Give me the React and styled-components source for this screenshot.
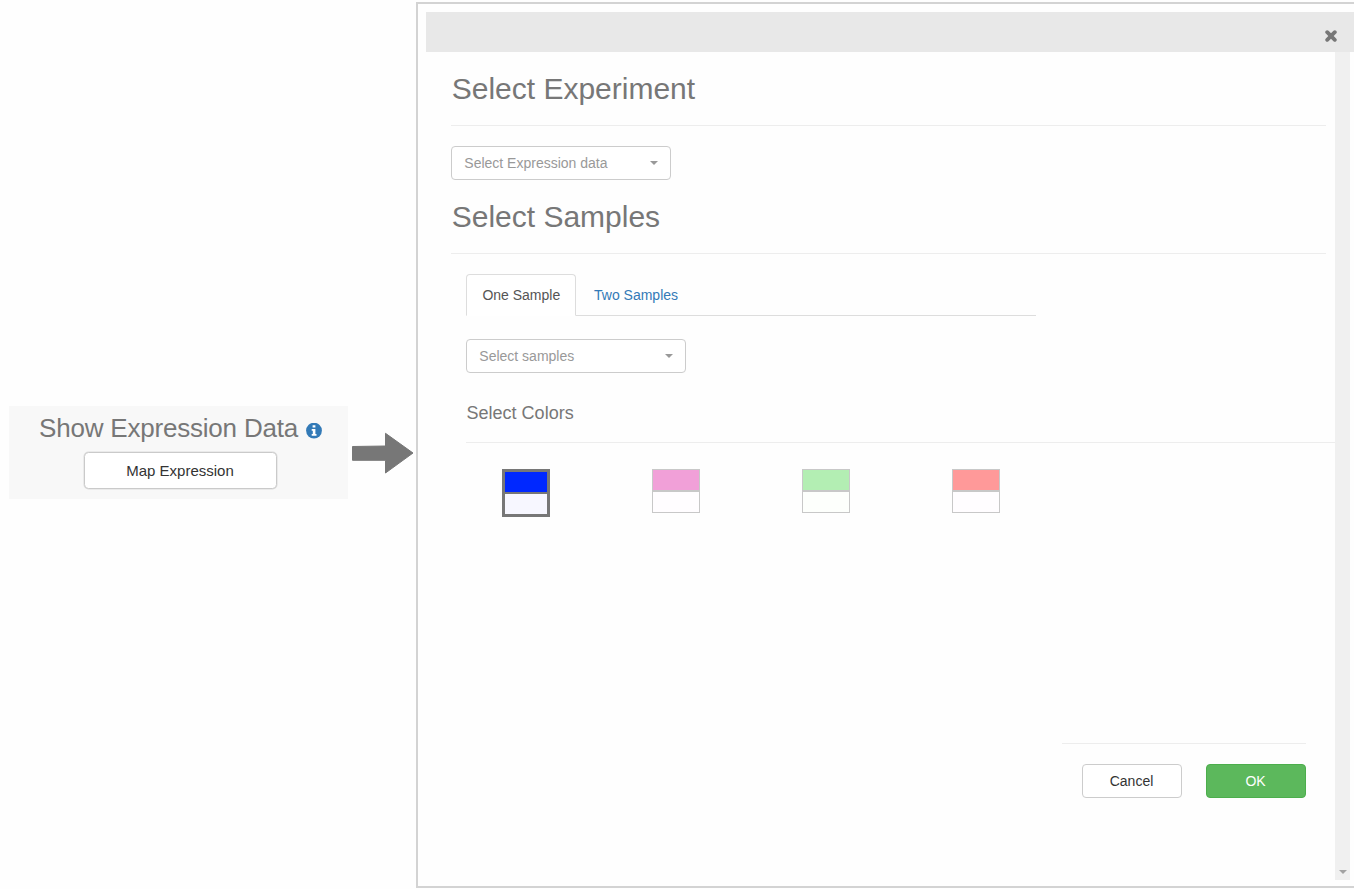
import React from 'react';
import styled, { createGlobalStyle, css } from 'styled-components';

const GlobalStyle = createGlobalStyle`
  * { box-sizing: border-box; }
  body {
    margin: 0;
    background: #fefefe;
    color: #777;
    font: 14px/20px "Liberation Sans", Arial, sans-serif;
    overflow: hidden;
  }
`;

const Page = styled.main`
  display: flex;
  width: 1354px;
  height: 889px;
  overflow: hidden;
`;

const Launcher = styled.section`
  flex: none;
  width: 339px;
  height: 93px;
  margin: 406px 0 0 9px;
  background: #f8f8f8;
`;

const LauncherTitle = styled.h3`
  display: flex;
  align-items: center;
  margin: 0;
  padding: 7px 0 0 30px;
  font-size: 26px;
  font-weight: 400;
  line-height: 30px;
  white-space: nowrap;
  letter-spacing: -0.2px;

  svg { flex: none; margin: 5px 0 0 8px; }
`;

const ArrowIcon = styled.svg`
  flex: none;
  width: 64px;
  height: 42px;
  margin: 432px 0 0 3px;
`;

const Dialog = styled.section`
  flex: none;
  width: 938px;
  height: 886px;
  margin: 2px 0 0 1px;
  padding: 8px 0 0 8px;
  border: 2px solid #d3d3d3;
  border-right: 0;
`;

const DialogHeader = styled.header`
  display: flex;
  justify-content: flex-end;
  height: 40px;
  padding: 18px 17px 0 0;
  background: #e8e8e8;
`;

const CloseButton = styled.button`
  width: 12px;
  height: 12px;
  padding: 0;
  border: 0;
  background: none;

  svg { display: block; }
`;

const DialogBody = styled.div`
  display: flex;
  height: 828px;
`;

const Content = styled.div`
  width: 909px;
  padding: 20px 0 0 25px;
`;

const Scrollbar = styled.div`
  display: flex;
  justify-content: center;
  align-items: flex-end;
  width: 15px;
  padding-bottom: 6px;
  background: #f0f0f0;
`;

const Rule = styled.hr`
  width: ${(p) => p.$width}px;
  height: 1px;
  margin: ${(p) => p.$top}px 0 0;
  border: 0;
  background: #ededed;
`;

const Heading = styled.h2`
  margin: 0;
  padding-left: 0.7px;
  font-size: 30px;
  font-weight: 400;
  line-height: 33px;
`;

const Select = styled.div`
  display: flex;
  align-items: center;
  justify-content: space-between;
  width: 220px;
  height: 34px;
  margin: ${(p) => p.$margin};
  padding: 0 12px 0 12.3px;
  border: 1px solid #ccc;
  border-radius: 4px;
  background: #fff;
  color: #999;
`;

const Caret = styled.span`
  border: 4px solid transparent;
  border-top-color: #999;
  border-bottom: 0;
`;

const Samples = styled.div`
  margin-left: 15px;
`;

const Tabs = styled.nav`
  display: flex;
  width: 570px;
  height: 42px;
  margin-top: 20px;
  border-bottom: 1px solid #ddd;
`;

const Tab = styled.div`
  height: 42px;
  margin-right: 2px;
  padding: 10px 15px;
  border: 1px solid transparent;
  color: #337ab7;
  white-space: nowrap;
  ${(p) => p.$active && css`
    width: 110px;
    padding-left: 15.4px;
    border-color: #ddd #ddd #fff;
    border-radius: 4px 4px 0 0;
    background: #fff;
    color: #555;
  `}
`;

const SubHeading = styled.h4`
  margin: 30px 0 0;
  padding-left: 0.6px;
  font-size: 18px;
  font-weight: 400;
  line-height: 20px;
`;

const Swatches = styled.div`
  display: flex;
  gap: 102px;
  margin: 26px 0 0 36px;
`;

const Swatch = styled.div`
  display: grid;
  grid-template-rows: 20px 20px;
  gap: 2px;
  width: 48px;
  height: ${(p) => (p.$selected ? 48 : 44)}px;
  border: ${(p) => (p.$selected ? '3px solid #777' : '1px solid #c8c8c8')};
  background: ${(p) => (p.$selected ? '#777' : '#c8c8c8')};
`;

const Tone = styled.span`
  background: ${(p) => p.$color};
`;

const Footer = styled.footer`
  width: 244px;
  margin: 226px 0 0 611px;
`;

const Actions = styled.div`
  display: flex;
  justify-content: flex-end;
  gap: 24px;
  margin-top: 20px;
`;

const Button = styled.button`
  width: 100px;
  height: 34px;
  padding: 0 1px 1px 0;
  border: 1px solid ${(p) => (p.$primary ? '#4cae4c' : '#ccc')};
  border-radius: 4px;
  background: ${(p) => (p.$primary ? '#5cb85c' : '#fff')};
  color: ${(p) => (p.$primary ? '#fff' : '#333')};
  font: inherit;
`;

const MapButton = styled(Button)`
  display: block;
  width: 193px;
  height: 37px;
  margin: 9px 0 0 74.5px;
  padding: 0;
  border-color: #cacaca;
  border-radius: 4.5px;
  box-shadow: 0 0 0 0.5px #dcdcdc;
  font-size: 15px;
`;

const palettes = [
  { high: '#0028ff', low: '#f7f7ff', selected: true },
  { high: '#f1a0d8', low: '#fffdff' },
  { high: '#b3eeb3', low: '#fdfffc' },
  { high: '#ff9999', low: '#fffdff' },
];

export default function App() {
  return (
    <Page>
      <GlobalStyle />
      <Launcher>
        <LauncherTitle>
          <span>Show Expression Data</span>
          <svg width="16" height="16" viewBox="0 0 16 16">
            <circle cx="8" cy="7.6" r="7.9" fill="#337ab7" />
            <path d="M6.6 2.2h2.8v2.2H6.6zM5.7 6h3.7v5h1.1v1.8H5.7V11h1.1V7.7H5.7z" fill="#fff" />
          </svg>
        </LauncherTitle>
        <MapButton>Map Expression</MapButton>
      </Launcher>
      <ArrowIcon viewBox="0 0 64 42">
        <path d="M1.5 14.5 34.5 14V1.3L62 21 34.5 41V28.3H1.5Z" fill="#777" stroke="#777" strokeLinejoin="round" />
      </ArrowIcon>
      <Dialog>
        <DialogHeader>
          <CloseButton aria-label="Close">
            <svg width="12" height="12" viewBox="0 0 12 12">
              <path d="M2.2 2.2 9.8 9.8M9.8 2.2 2.2 9.8" stroke="#777" strokeWidth="3.8" strokeLinecap="round" />
            </svg>
          </CloseButton>
        </DialogHeader>
        <DialogBody>
          <Content>
            <Heading>Select Experiment</Heading>
            <Rule $width={875} $top={20} />
            <Select $margin="20px 0 20px">Select Expression data<Caret /></Select>
            <Heading>Select Samples</Heading>
            <Rule $width={875} $top={20} />
            <Samples>
              <Tabs>
                <Tab $active>One Sample</Tab>
                <Tab>Two Samples</Tab>
              </Tabs>
              <Select $margin="23px 0 0">Select samples<Caret /></Select>
              <SubHeading>Select Colors</SubHeading>
              <Rule $width={869} $top={19} />
              <Swatches>
                {palettes.map((p) => (
                  <Swatch key={p.high} $selected={p.selected}>
                    <Tone $color={p.high} />
                    <Tone $color={p.low} />
                  </Swatch>
                ))}
              </Swatches>
            </Samples>
            <Footer>
              <Rule $width={244} $top={0} />
              <Actions>
                <Button>Cancel</Button>
                <Button $primary>OK</Button>
              </Actions>
            </Footer>
          </Content>
          <Scrollbar>
            <svg width="8" height="4" viewBox="0 0 8 4"><path d="M0 0h8L4 4z" fill="#a3a3a3" /></svg>
          </Scrollbar>
        </DialogBody>
      </Dialog>
    </Page>
  );
}
